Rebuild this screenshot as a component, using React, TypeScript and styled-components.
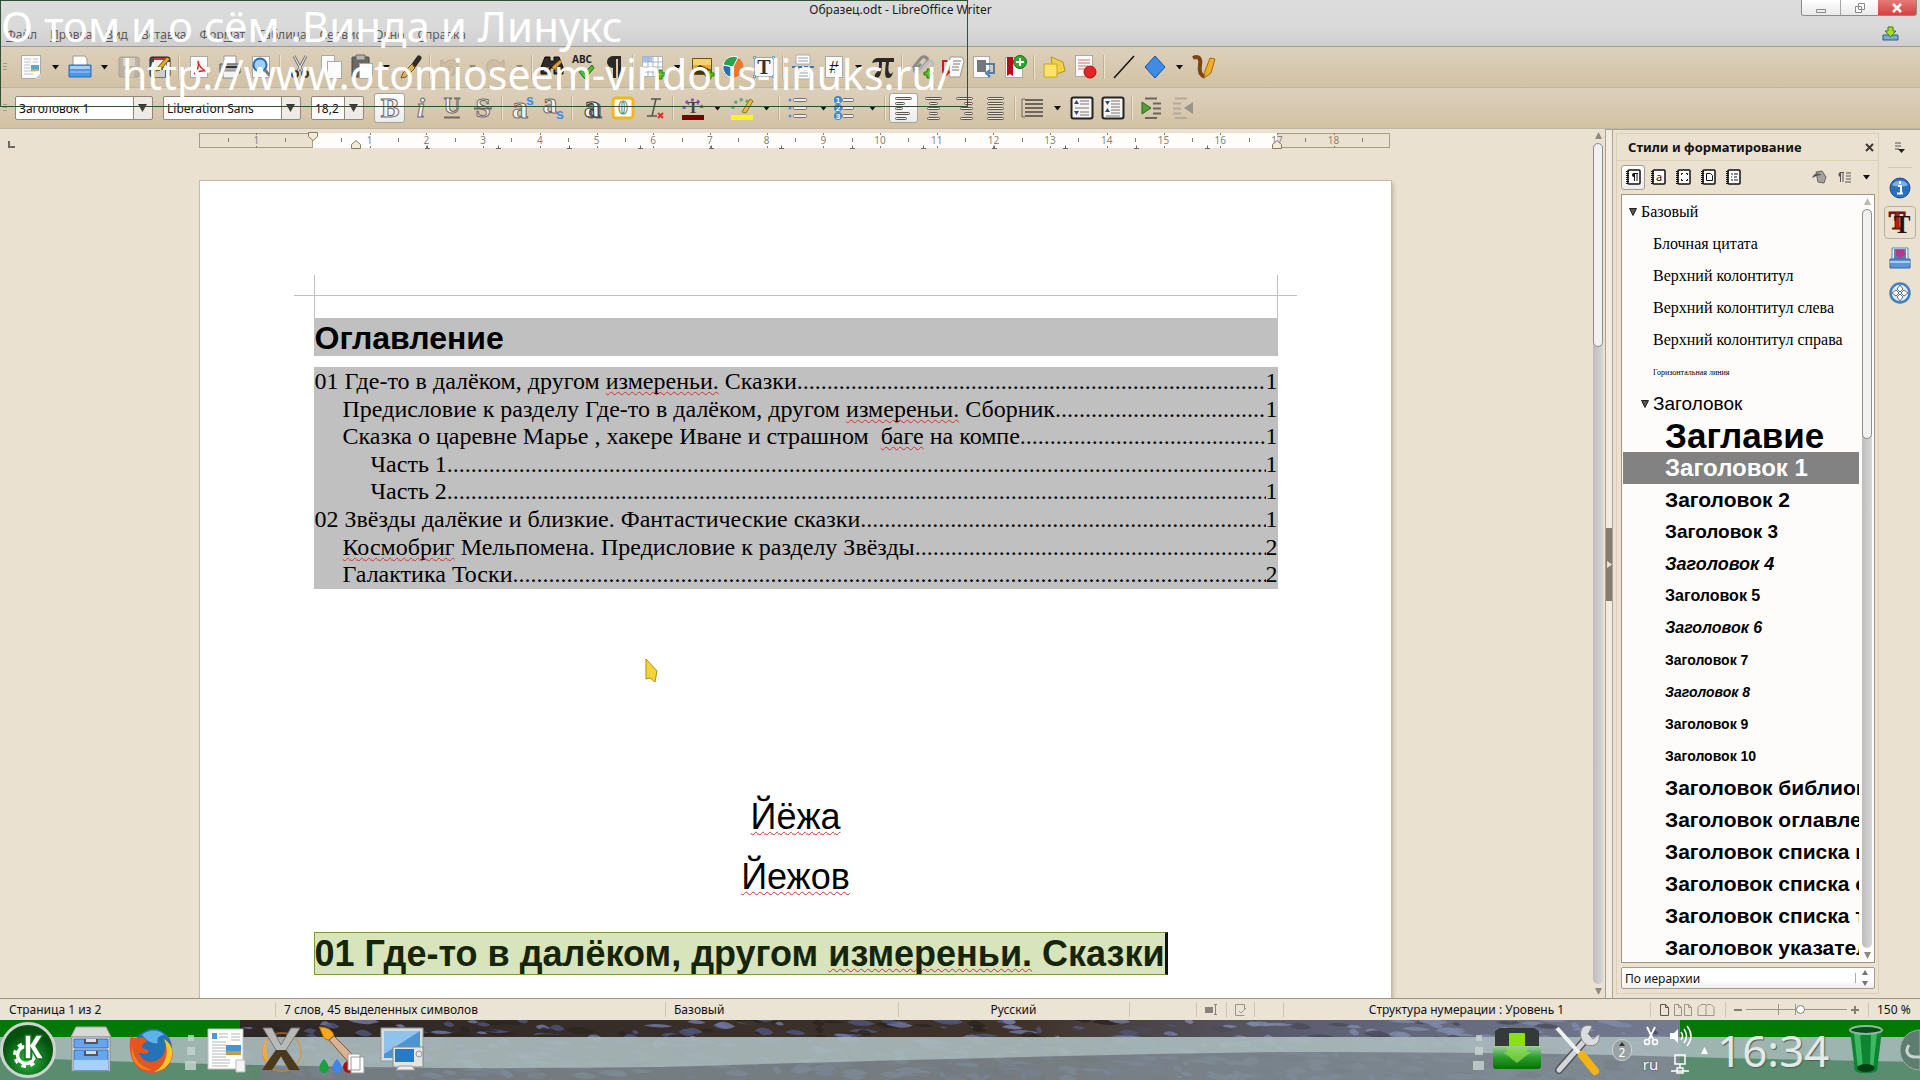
import React from "react";
import styled, { createGlobalStyle } from "styled-components";

const ui = `"Noto Sans", "Open Sans", sans-serif`;
const sans = `"Liberation Sans", Arial, sans-serif`;
const serif = `"Liberation Serif", "Times New Roman", serif`;

const Global = createGlobalStyle`
  *, *::before, *::after { box-sizing: border-box; }
  html, body { margin: 0; height: 100%; overflow: hidden; }
  body { font-family: ${ui}; font-size: 12px; color: #111; }
  button { font: inherit; color: inherit; padding: 0; border: 0; background: none; }
  a { color: inherit; text-decoration: none; }
  svg { display: block; flex: none; overflow: visible; }
`;

const Desktop = styled.div`
  position: relative;
  display: flex;
  flex-direction: column;
  height: 100vh;
  background: #eae1d1;
`;

/* ---------- window header ---------- */

const Header = styled.header`
  background: linear-gradient(#dcdcdc, #d9d9d9 60%, #cfcfcf);
  border-bottom: 1px solid #9b9b9b;
`;
const TitleBar = styled.div`
  display: flex;
  height: 22px;
  padding-right: 3px;
`;
const WindowTitle = styled.h1`
  flex: 1;
  margin: 0;
  font-size: 12px;
  line-height: 19px;
  font-weight: 400;
  text-align: center;
  color: #1c1c1c;
`;
const WindowButtons = styled.div`
  display: flex;
  height: 16px;
  border: 1px solid #8b8b8b;
  border-top: 0;
  border-radius: 0 0 3px 3px;
  overflow: hidden;
`;
const WindowButton = styled.button<{ $close?: boolean }>`
  display: grid;
  place-items: center;
  width: 38px;
  background: ${(p) => (p.$close ? "linear-gradient(#e47a76, #d8403f)" : "linear-gradient(#fff, #e9e9e9)")};
  border-left: ${(p) => (p.$close ? "0" : "1px solid #a5a5a5")};
  &:first-child { border-left: 0; }
`;
const MenuRow = styled.div`
  display: flex;
  align-items: center;
  justify-content: space-between;
  height: 24px;
  padding: 0 21px 0 6px;
`;
const Menu = styled.nav`
  display: flex;
  gap: 13px;
  font-size: 12px;
  color: #5c5c5c;
  u { text-underline-offset: 2px; }
`;

/* ---------- tool bars ---------- */

const ToolBar = styled.div`
  display: flex;
  align-items: center;
  height: 41px;
  background: linear-gradient(#ddd0bb, #d2c2a5);
  border-bottom: 1px solid #bdb5a6;
`;
const Grip = styled.div`
  width: 15px;
  height: 8px;
  padding-left: 3px;
  background: repeating-linear-gradient(#a59b88 0 1px, transparent 1px 3px) content-box;
  border-right: 8px solid transparent;
`;
const Tool = styled.button<{ $w?: number; $on?: boolean; $dim?: boolean }>`
  display: grid;
  place-items: center;
  width: ${(p) => p.$w || 31}px;
  height: 30px;
  opacity: ${(p) => (p.$dim ? 0.35 : 1)};
  border: 1px solid ${(p) => (p.$on ? "#a9a296" : "transparent")};
  border-radius: 3px;
  background: ${(p) => (p.$on ? "linear-gradient(#ffffff, #ececec)" : "none")};
`;
const Separator = styled.span`
  width: 8px;
  height: 24px;
  background: linear-gradient(90deg, transparent 3px, #c0b196 3px 4px, #ece2d0 4px 5px, transparent 5px);
`;
const Combo = styled.label<{ $w: number }>`
  display: grid;
  grid-template-columns: 1fr 19px;
  width: ${(p) => p.$w}px;
  height: 24px;
  margin-right: 10px;
  border: 1px solid #8f8778;
  border-radius: 2px;
  background: linear-gradient(90deg, transparent calc(100% - 19px), #8f8778 calc(100% - 19px) calc(100% - 18px), transparent calc(100% - 18px)),
    linear-gradient(90deg, #fff calc(100% - 19px), #eeebe6 calc(100% - 19px));
  svg { grid-area: 1 / 2; place-self: center; pointer-events: none; }
`;
const ComboSelect = styled.select`
  grid-area: 1 / 1 / 2 / 3;
  appearance: none;
  min-width: 0;
  padding: 0 0 0 3px;
  border: 0;
  outline: 0;
  background: none;
  font: 12px ${ui};
  color: #111;
`;

/* ---------- work area ---------- */

const Work = styled.main`
  display: flex;
  flex: 1;
  min-height: 0;
`;
const Editor = styled.section`
  display: flex;
  flex-direction: column;
  align-items: center;
  flex: 1;
  min-width: 0;
  overflow: hidden;
`;
const RulerRow = styled.div`
  display: grid;
  grid-template-columns: 1fr auto 1fr;
  align-self: stretch;
  height: 52px;
  padding-top: 2px;
`;
const TabKind = styled.button`
  display: block;
  width: 20px;
  height: 20px;
  padding: 6px 0 0 8px;
`;
const Page = styled.article`
  width: 1191px;
  flex: 1 0 auto;
  background: #fff;
  box-shadow: 0 0 0 1px #c3bbac, 2px 2px 4px rgba(90, 80, 60, 0.35);
`;
const Corners = styled.div`
  display: grid;
  grid-template-columns: 94px 20px 1fr 20px 94px;
  grid-template-rows: 94px 20px 23px;
`;
const CornerLine = styled.i<{ $at: string; $side: "left" | "right" | "top" }>`
  grid-area: ${(p) => p.$at};
  border: 0 solid #c0c0c0;
  border-${(p) => p.$side}-width: 1px;
`;
const Body = styled.div`
  margin: 0 113px 0 114px;
`;
const TocTitle = styled.h2`
  margin: 0 0 11px;
  padding: 2px 0 0 1px;
  background: #c0c0c0;
  font: 700 32px/36px ${sans};
  color: #000;
`;
const Toc = styled.nav`
  display: grid;
  grid-template-columns: minmax(0, 1fr);
  padding-top: 1px;
  background: #c0c0c0;
  font: 24px/1.15 ${serif};
  color: #000;
`;
const TocLine = styled.a<{ $level: number }>`
  display: flex;
  padding-left: ${(p) => 1 + p.$level * 28}px;
  white-space: pre;
`;
const Leader = styled.span`
  flex: 1;
  min-width: 0;
  overflow: hidden;
`;
const Misspelt = styled.span`
  text-decoration: underline wavy #d03030 1px;
  text-decoration-skip-ink: none;
  text-underline-offset: 2px;
`;
const Subtitle = styled.p<{ $top: number }>`
  margin: ${(p) => p.$top}px 0 0;
  font: 36px/42px ${sans};
  text-align: center;
  color: #000;
`;
const Chapter = styled.h2`
  width: fit-content;
  margin: 34px 0 0;
  border: 1px solid #7c9a3d;
  border-right: 3px solid #111;
  background: #d8e4bc;
  font: 700 36px/41px ${sans};
  color: #16240a;
`;

const ScrollColumn = styled.div`
  display: flex;
  flex-direction: column;
  align-items: center;
  justify-content: space-between;
  width: 15px;
  padding: 3px 2px 3px 3px;
`;
const Track = styled.div`
  flex: 1;
  width: 10px;
  margin: 4px 0;
  border-radius: 5px;
  background: linear-gradient(90deg, #bcbcbc, #d6d6d6);
`;
const Thumb = styled.div<{ $size: string }>`
  height: ${(p) => p.$size};
  border: 1px solid #8d8d8d;
  border-radius: 5px;
  background: #f1f1f1;
`;
const Splitter = styled.div`
  display: flex;
  align-items: center;
  width: 8px;
  border: 1px solid #aaa293;
  border-width: 1px 1px 0;
  background: #f2ecdf;
`;
const SplitHandle = styled.button`
  display: grid;
  place-items: center;
  width: 6px;
  height: 73px;
  background: #877d6d;
`;

/* ---------- side bar ---------- */

const Deck = styled.aside`
  display: flex;
  flex-direction: column;
  width: 266px;
  padding: 3px 0 4px 3px;
  border-top: 1px solid #aaa293;
`;
const DeckFrame = styled.div`
  display: flex;
  flex-direction: column;
  flex: 1;
  min-height: 0;
  padding: 0 3px 4px 4px;
  border: 1px solid #dccfb6;
`;
const DeckTitle = styled.div`
  display: flex;
  align-items: center;
  justify-content: space-between;
  height: 27px;
  margin: 0 -3px 0 -4px;
  padding: 0 4px 0 11px;
  border-bottom: 1px solid #dccfb6;
  h2 { margin: 0; font-size: 13px; line-height: 27px; font-weight: 700; }
`;
const StyleTools = styled.div`
  display: flex;
  align-items: center;
  gap: 1px;
  height: 33px;
  padding-bottom: 1px;
  div { flex: 1; }
`;
const StyleTool = styled.button<{ $on?: boolean; $w?: number }>`
  display: grid;
  place-items: center;
  width: ${(p) => p.$w || 24}px;
  height: 25px;
  border: 1px solid ${(p) => (p.$on ? "#a39c90" : "transparent")};
  border-radius: 3px;
  background: ${(p) => (p.$on ? "linear-gradient(#fff, #ececec)" : "none")};
`;
const ListBox = styled.div`
  display: flex;
  flex: 1;
  min-height: 0;
  border: 1px solid #a3947a;
  background: #fdfcfb;
`;
const StyleList = styled.ul`
  flex: 1;
  min-width: 0;
  margin: 0;
  padding: 1px 0 0 1px;
  list-style: none;
  overflow: hidden;
`;
const StyleRow = styled.li<{ $level: number; $size: number; $face: "serif" | "sans"; $bold?: boolean; $italic?: boolean; $on?: boolean }>`
  display: flex;
  align-items: center;
  gap: 4px;
  height: 32px;
  padding-left: ${(p) => 6 + p.$level * 12}px;
  overflow: hidden;
  white-space: nowrap;
  font-family: ${(p) => (p.$face === "serif" ? serif : sans)};
  font-size: ${(p) => p.$size}px;
  font-weight: ${(p) => (p.$bold ? 700 : 400)};
  font-style: ${(p) => (p.$italic ? "italic" : "normal")};
  color: ${(p) => (p.$on ? "#fff" : "#000")};
  background: ${(p) => (p.$on ? "#828282" : "none")};
`;
const Twisty = styled.span`
  width: 8px;
  flex: none;
`;
const Filter = styled.label`
  display: grid;
  grid-template-columns: 1fr 24px;
  height: 22px;
  margin-top: 4px;
  border: 1px solid #a39c90;
  border-radius: 2px;
  background: linear-gradient(#fff 60%, #eee);
  svg { grid-area: 1 / 2; place-self: center; pointer-events: none; }
`;
const TabStrip = styled.nav`
  display: flex;
  flex-direction: column;
  align-items: center;
  width: 41px;
  border-top: 1px solid #aaa293;
  hr { width: 24px; margin: 2px 0 3px; border: 0; border-top: 1px solid #d3c9b6; }
`;
const Tab = styled.button<{ $on?: boolean }>`
  display: grid;
  place-items: center;
  width: 32px;
  height: 33px;
  margin-bottom: 2px;
  border: 1px solid ${(p) => (p.$on ? "#b9b1a3" : "transparent")};
  border-radius: 4px;
`;

/* ---------- status bar ---------- */

const StatusBar = styled.footer`
  display: grid;
  grid-template-columns: 275fr 390fr 233fr 231fr 67fr 30fr 28fr 29fr 367fr 75fr 143fr 52fr;
  height: 22px;
  border-top: 1px solid #9c9384;
  background: #ebe3d4;
`;
const Cell = styled.div<{ $center?: boolean }>`
  display: flex;
  align-items: center;
  justify-content: ${(p) => (p.$center ? "center" : "flex-start")};
  gap: 4px;
  min-width: 0;
  padding: 0 ${(p) => (p.$center ? 0 : 9)}px;
  white-space: nowrap;
  line-height: 20px;
  & + & {
    background: linear-gradient(#cfc5b3, #cfc5b3) 0 3px / 1px 15px no-repeat;
  }
`;
const Zoom = styled.input`
  flex: 1;
  min-width: 0;
  height: 15px;
  margin: 0;
  appearance: none;
  background: linear-gradient(#9c968a, #9c968a) 0 7px / 100% 1px no-repeat,
    linear-gradient(#9c968a, #9c968a) 32% 2px / 1px 11px no-repeat,
    linear-gradient(#9c968a, #9c968a) 49% 2px / 1px 11px no-repeat;
  &::-webkit-slider-thumb {
    appearance: none;
    width: 9px;
    height: 9px;
    border: 1px solid #857f73;
    border-radius: 5px;
    background: #fff;
  }
`;

/* ---------- desktop panel ---------- */

const Panel = styled.footer`
  display: grid;
  height: 60px;
  overflow: hidden;
  > * { grid-area: 1 / 1; min-width: 0; }
`;
const PanelItems = styled.div`
  display: flex;
  align-items: center;
  justify-content: space-between;
  z-index: 1;
`;
const PanelGroup = styled.div`
  display: flex;
  align-items: center;
  height: 60px;
`;
const PanelButton = styled.button<{ $w: number }>`
  display: grid;
  place-items: center;
  width: ${(p) => p.$w}px;
  height: 60px;
`;
const Tray = styled.div`
  display: grid;
  grid-template-columns: 29px 29px;
  grid-template-rows: 28px 28px;
  place-items: center;
  color: #fff;
  font-size: 15px;
  text-shadow: 0 0 2px #333;
`;
const Desk = styled.button`
  display: grid;
  place-items: center;
  align-content: center;
  width: 20px;
  height: 22px;
  margin: 0 4px;
  border: 1px solid #ccd4d4;
  border-radius: 10px;
  background: #98a2a4;
  color: #fff;
  font-size: 12px;
  line-height: 13px;
`;
const Clock = styled.time`
  width: 122px;
  padding-left: 3px;
  font-size: 44px;
  line-height: 52px;
  color: #e3e9e6;
  text-shadow: 1px 1px 1px #4c5f58;
`;

/* ---------- overlays ---------- */

const Caption = styled.div`
  position: absolute;
  top: 0;
  left: 0;
  width: 968px;
  height: 107px;
  border: 1px solid #2f4f37;
  color: #fff;
  font-size: 42px;
  line-height: 49px;
  white-space: nowrap;
  pointer-events: none;
  p { margin: 0; }
  p + p { padding-left: 121px; font-size: 41px; }
`;
const Pointer = styled.div`
  position: absolute;
  left: 645px;
  top: 658px;
  pointer-events: none;
`;

/* ---------- drawings ---------- */

const Svg = ({ w = 24, h, box, children }: { w?: number; h?: number; box?: string; children: React.ReactNode }) => (
  <svg width={w} height={h ?? w} viewBox={box ?? `0 0 ${w} ${h ?? w}`} fill="none" aria-hidden="true">{children}</svg>
);
const Down = ({ c = "#111" }: { c?: string }) => <Svg w={7} h={5}><path d="M0 0h7L3.5 4.500z" fill={c} /></Svg>;
const BigDown = () => <Svg w={9} h={8}><path d="M0 0h9L4.500 8z" fill="#3e3b36" /></Svg>;
const UpArrow = ({ c = "#8d8980" }: { c?: string }) => <Svg w={7} h={7}><path d="M3.500 0L7 7H0z" fill={c} /></Svg>;
const DownArrow = () => <Svg w={7} h={7}><path d="M3.500 7L7 0H0z" fill="#8d8980" /></Svg>;

const Sheet = ({ x = 3, y = 1, w = 18, h = 22 }) => (
  <rect x={x + 0.5} y={y + 0.5} width={w - 1} height={h - 1} fill="#fbfbfb" stroke="#a9a9a9" />
);
const Plus = ({ x = 15, y = 15 }) => (
  <path d={`M${x + 3} ${y}h3v3h3v3h-3v3h-3v-3h-3v-3h3z`} fill="#5cc81c" stroke="#26720a" />
);
const Glyph = ({ t, size = 24, italic, fill = "#f7f4ee", stroke = "#6d6a66", x = 12, y = 20 }: {
  t: string; size?: number; italic?: boolean; fill?: string; stroke?: string; x?: number; y?: number;
}) => (
  <text x={x} y={y} fontSize={size} fontWeight="700" fontFamily="Liberation Serif" fontStyle={italic ? "italic" : "normal"}
    textAnchor="middle" fill={fill} stroke={stroke} strokeWidth="1">{t}</text>
);

const icons: Record<string, React.ReactNode> = {
  new: <><Sheet x={2} y={0} w={20} h={24} /><path d="M5 4h7M5 7h7M5 10h6M5 13h6M5 16h12M5 19h9M14 4h5M14 7h5" stroke="#b9c6d0" /><rect x="12" y="10" width="8" height="6" fill="#4fa7d8" /><rect x="12" y="14" width="8" height="2" fill="#d8a83c" /><path d="M16 24l6-6v6z" fill="#ccc" /></>,
  open: <><path d="M5 1h12l2 3v9H5z" fill="#fff" stroke="#999" /><path d="M1 10h22v12H1z" fill="#4c98e6" stroke="#2a6db5" /><path d="M2 11h20v3H2z" fill="#a6d0fa" /><path d="M2 16h20v2H2z" fill="#78b4f2" /></>,
  save: <><rect x="2" y="2" width="20" height="20" rx="2" fill="#8c8c8c" stroke="#555" /><path d="M6 3h12v8H6z" fill="#ddd" /><path d="M7 14h10v8H7z" fill="#bbb" /></>,
  saveas: <><rect x="2" y="2" width="20" height="20" rx="2" fill="#4a4a4a" stroke="#222" /><path d="M6 3h12v9H6z" fill="#f2efe6" /><path d="M6 3h12v2H6z" fill="#c33" /><path d="M7 15h10v7H7z" fill="#ccc" /><path d="M9 13L19 2l3 2-10 11-4 1z" fill="#e6a62a" stroke="#7a4b08" /></>,
  pdf: <><Sheet /><path d="M7 19c5-5 5-9 4-13 1 6 5 9 9 10-5-1-9 0-13 3z" stroke="#d9231d" strokeWidth="1.500" /></>,
  print: <><path d="M6 1h12v8H6z" fill="#fff" stroke="#999" /><path d="M2 9h20v9H2z" fill="#a9adb2" stroke="#555" /><path d="M4 11h16v2H4z" fill="#333" /><path d="M5 16h14v7H5z" fill="#f3f3f3" stroke="#888" /></>,
  preview: <><Sheet /><circle cx="11" cy="10" r="6.500" fill="#9cd0f5" stroke="#2c6cae" strokeWidth="2" /><path d="M16 15l6 7" stroke="#777" strokeWidth="3" /></>,
  cut: <><path d="M6 1l8 15M18 1l-8 15" stroke="#777" strokeWidth="3" /><path d="M6 1l8 15M18 1l-8 15" stroke="#f2f2f2" /><circle cx="7" cy="19" r="3" stroke="#333" strokeWidth="2" /><circle cx="17" cy="19" r="3" stroke="#333" strokeWidth="2" /></>,
  copy: <><Sheet x={2} y={0} w={14} h={17} /><Sheet x={8} y={6} w={15} h={18} /></>,
  paste: <><rect x="2" y="2" width="17" height="20" rx="1" fill="#6b6762" stroke="#444" /><path d="M6 0h9v5H6z" fill="#b5b5b5" stroke="#666" /><Sheet x={9} y={8} w={14} h={16} /></>,
  brush: <><path d="M20 3l-5 7" stroke="#2d2a27" strokeWidth="5" strokeLinecap="round" /><path d="M13 9l3 4-9 9-5 1 2-5z" fill="#d8b15e" stroke="#7d5a1a" /></>,
  undo: <path d="M4 14V5l4 3c6-6 14-3 13 5-1 6-7 8-7 8 4-5 3-10-3-9l3 3z" fill="#b9a98a" stroke="#80745c" />,
  redo: <path d="M20 14V5l-4 3C10 2 2 5 3 13c1 6 7 8 7 8-4-5-3-10 3-9l-3 3z" fill="#b9a98a" stroke="#80745c" />,
  find: <><path d="M5 2h5v4h4V2h5l4 10v7h-9v-6h-4v6H1v-7z" fill="#2f2c28" stroke="#0c0c0c" /><path d="M4 12h5v5H4zM15 12h5v5h-5z" fill="#7a6a55" /><path d="M12 12l8-7 2 2-8 8z" fill="#e29a22" /></>,
  spell: <><text x="11" y="8" fontSize="10" fontWeight="700" fontFamily="Noto Sans" textAnchor="middle" fill="#222">ABC</text><path d="M8 17l4-3 2 3 7-7 2 3-9 11z" fill="#4dbb2b" stroke="#1f7a10" /></>,
  pilcrow: <path d="M19 1H11a6 6 0 0 0 0 12v10h3V4h2v19h3z" fill="#2b2926" />,
  table: <><path d="M1.500 1.500h20v20h-20z" fill="#fff" stroke="#aab4bc" /><path d="M2 2h9v5H2z" fill="#9cc6ec" /><path d="M1 7h21M1 12h21M1 17h21M7 1v21M12 1v21M17 1v21" stroke="#aab4bc" /><Plus /></>,
  image: <><path d="M2.500 3.500h19v16h-19z" fill="#e6a92d" stroke="#6b5010" /><path d="M3 4h18v6H3z" fill="#f6d26e" /><path d="M3 14l7-4 11 5v4H3z" fill="#4a2f12" /><Plus /></>,
  chart: <><circle cx="12" cy="12" r="10.500" fill="#e9772c" /><path d="M12 12L2 10A10.500 10.500 0 0 1 17 2.500z" fill="#2fa04c" stroke="#fff" /><path d="M12 12L2 10a10.500 10.500 0 0 0 9 12.500z" fill="#2a6ab8" stroke="#fff" /></>,
  textbox: <><path d="M2.500 2.500h19v19h-19z" fill="#f8f8f8" stroke="#8fa8bc" /><text x="12" y="19" fontSize="20" fontWeight="700" fontFamily="Liberation Serif" textAnchor="middle" fill="#333">T</text><path d="M1.500 1.500h2v2h-2zM20.500 1.500h2v2h-2zM1.500 20.500h2v2h-2zM20.500 20.500h2v2h-2z" fill="#d8e8f6" stroke="#6a9bc4" /></>,
  pagebreak: <><path d="M5 0h14v9H5zM5 15h14v9H5z" fill="#fff" stroke="#aaa" /><path d="M7 3h10M7 6h10M7 18h10M7 21h10" stroke="#8fa0b0" /><path d="M1 12h22" stroke="#3d7ab5" strokeWidth="2" strokeDasharray="4 2" /></>,
  field: <><Sheet /><text x="12" y="18" fontSize="17" fontFamily="Liberation Sans" textAnchor="middle" fill="#111">#</text></>,
  pi: <path d="M1 8c2-5 4-5 7-5h15v4h-5c-1 8-1 11 2 12l2-2c-1 5-3 6-5 6-4 0-3-6-2-16h-4c0 7-1 16-5 16-3 0-3-3-1-5 3-2 3-6 3-11-3 0-4 0-7 1z" fill="#2b2926" />,
  link: <><path d="M5 15l6-6M3 13l8-10c3-3 8 0 6 4l-7 9c-3 3-7 0-5-3" stroke="#8a8a8a" strokeWidth="3" /><path d="M9 18l9-11c3-3 6 1 4 4l-5 7" stroke="#bdbdbd" strokeWidth="3" /><Plus x={14} y={14} /></>,
  footnote: <><path d="M9 2h12l2 4-4 16H8z" fill="#fafafa" stroke="#999" /><path d="M12 6h8M12 9h7M11 12h7M11 15h7" stroke="#777" /><path d="M8 6H2v11h4M4 14l4 3-4 4" stroke="#c61f1f" strokeWidth="2" /></>,
  cross: <><Sheet x={1} y={1} w={17} h={22} /><path d="M5 5h9v12H5z" fill="#73777b" /><path d="M14 9h8v9h-6M18 15l-4 3 4 4" stroke="#4a7fb4" strokeWidth="2" /></>,
  bookmark: <><Sheet x={2} y={2} w={18} h={21} /><path d="M4 2h6v19l-3-2-3 2z" fill="#b80c1c" /><circle cx="17" cy="7" r="6.500" fill="#2da82d" stroke="#157015" /><path d="M17 3v8M13 7h8" stroke="#fff" strokeWidth="2" /></>,
  comment: <><path d="M9 2l12 5 2 9-11 4z" fill="#f1d244" stroke="#b79516" /><path d="M2 9h13v13H2z" fill="#fbe36a" stroke="#c9a21f" /></>,
  track: <><Sheet x={2} y={0} /><path d="M5 5h12M5 8h12M5 11h10M5 14h8" stroke="#d56b6b" /><circle cx="17" cy="17" r="6" fill="#e32626" stroke="#a80f0f" /></>,
  line: <path d="M2 23L22 1" stroke="#111" strokeWidth="1.500" />,
  shape: <path d="M12 1l10 11-10 11L2 12z" fill="#3f8be6" stroke="#174f9e" />,
  pen: <><path d="M1 3c6-3 8 1 7 7-1 5 0 10 5 12" stroke="#7c4417" strokeWidth="4" /><path d="M18 3l5 1-4 14-7 5 1-7z" fill="#f0ac28" stroke="#a86a0b" /></>,
  bold: <Glyph t="B" size={28} y={21} />,
  italic: <Glyph t="i" size={28} italic y={21} />,
  underline: <><Glyph t="U" size={23} y={17} /><path d="M4 21.500h16" stroke="#6d6a66" strokeWidth="2" /></>,
  strike: <><Glyph t="S" size={27} y={21} /><path d="M3 12.500h18" stroke="#6d6a66" strokeWidth="2" /></>,
  sup: <><Glyph t="a" size={32} x={10} y={22} /><text x="20" y="9" fontSize="14" fontWeight="700" fontFamily="Liberation Sans" textAnchor="middle" fill="#3b8ee8">s</text></>,
  sub: <><Glyph t="a" size={29} x={9} y={17} /><text x="19" y="23" fontSize="14" fontWeight="700" fontFamily="Liberation Sans" textAnchor="middle" fill="#3b8ee8">s</text></>,
  shadow: <><Glyph t="a" size={32} x={14} y={22} fill="#666" stroke="#666" /><Glyph t="a" size={32} x={12} y={21} stroke="#333" /></>,
  outline: <><rect x="2" y="2" width="20" height="20" rx="3" fill="#fff" stroke="#f0b71e" strokeWidth="3" /><Glyph t="0" size={19} y={18} fill="#fff" stroke="#5c8f66" /></>,
  clear: <><path d="M9 3h10M5 20h10M14 3l-4 17" stroke="#555" strokeWidth="1.500" /><path d="M16 17l5 5M21 17l-5 5" stroke="#d3342c" strokeWidth="2" /></>,
  fontcolor: <><path d="M3 13a9 9 0 0 1 18 0" stroke="#8c55b5" strokeWidth="3" strokeDasharray="3 3" /><text x="12" y="17" fontSize="16" fontWeight="700" fontFamily="Liberation Serif" textAnchor="middle" fill="#444">T</text><path d="M1 19h22v5H1z" fill="#7c0000" /></>,
  backcolor: <><path d="M3 13a9 9 0 0 1 15-7" stroke="#5fa87a" strokeWidth="3" strokeDasharray="3 3" /><path d="M12 16L20 3l3 2-7 12z" fill="#e3c331" stroke="#8d7410" /><path d="M1 19h22v5H1z" fill="#fdf12a" /></>,
  bullets: <>{[4, 12, 20].map((y) => <g key={y}><circle cx="3" cy={y} r="1.500" fill="#5590cc" /><rect x="6.500" y={y - 1.500} width="13" height="3" rx="1" fill="#eee" stroke="#77736c" /></g>)}</>,
  numbers: <>{[4, 12, 20].map((y, i) => <g key={y}><circle cx="2" cy={y} r="4" fill="#3b86d8" /><text x="2" y={y + 3} fontSize="8" fontWeight="700" fontFamily="Liberation Sans" textAnchor="middle" fill="#fff">{i + 1}</text><rect x="6.500" y={y - 1.500} width="11" height="3" rx="1" fill="#eee" stroke="#77736c" /></g>)}</>,
};

const bars = (rows: [number, number][]) => (
  <>{rows.map(([x, w], i) => <rect key={i} x={x + 0.5} y={1.5 + i * 5} width={w} height="2" rx="1" fill="#f0ece4" stroke="#5b5750" />)}</>
);
icons.left = bars([[3, 16], [3, 9], [3, 7], [3, 14], [3, 11]]);
icons.center = bars([[3, 16], [7, 8], [5, 12], [7, 8], [5, 12]]);
icons.right = bars([[3, 16], [11, 8], [7, 12], [11, 8], [7, 12]]);
icons.justify = bars([[3, 16], [3, 16], [3, 16], [3, 16], [3, 16]]);
icons.spacing = <><path d="M3 4h18M3 8h18M3 12h18M3 16h18M3 20h18" stroke="#6b675f" strokeWidth="2" /><path d="M0 3v18M0 3h3M0 21h3" stroke="#6b675f" /></>;
icons.above = <><rect x="1.500" y="1.500" width="21" height="21" rx="2" fill="#f6f4f0" stroke="#222" strokeWidth="2" /><path d="M10 5h9M10 8h9M5 12h14M10 16h9M10 19h9" stroke="#777" /><path d="M4 8h5L6.500 4zM4 15h5l-2.500 4z" fill="#2d4a77" /></>;
icons.below = <><rect x="1.500" y="1.500" width="21" height="21" rx="2" fill="#f6f4f0" stroke="#222" strokeWidth="2" /><path d="M10 5h9M10 8h9M10 11h9M10 14h9M10 17h9M5 20h14" stroke="#777" /><path d="M4 5h5L6.500 9zM4 16h5l-2.500-4z" fill="#2d4a77" /></>;
icons.indent = <><path d="M2 6l9 6-9 6z" fill="#4f9f3c" stroke="#2a6b1c" /><path d="M5 2.500h12M13 7.500h8M13 12.500h8M13 17.500h8M5 22h12" stroke="#6b675f" strokeWidth="2" /></>;
icons.outdent = <><path d="M22 6l-9 6 9 6z" fill="#9b9488" /><path d="M4 2.500h12M2 7.500h8M2 12.500h8M2 17.500h8M4 22h12" stroke="#b3aa9a" strokeWidth="2" /></>;

type Item = [string, string, ("menu" | "")?];
const mainTools: Item[][] = [
  [["new", "Создать", "menu"], ["open", "Открыть", "menu"], ["save", "Сохранить"], ["saveas", "Сохранить как"]],
  [["pdf", "Экспорт в PDF"], ["print", "Печать"], ["preview", "Просмотр"]],
  [["cut", "Вырезать"], ["copy", "Копировать"], ["paste", "Вставить", "menu"], ["brush", "Копировать форматирование"]],
  [["undo", "Отменить", "menu"], ["redo", "Вернуть", "menu"]],
  [["find", "Найти и заменить"], ["spell", "Орфография"], ["pilcrow", "Непечатаемые символы"]],
  [["table", "Таблица", "menu"], ["image", "Изображение"], ["chart", "Диаграмма"], ["textbox", "Надпись"]],
  [["pagebreak", "Разрыв страницы"], ["field", "Поле", "menu"], ["pi", "Формула"]],
  [["link", "Гиперссылка"], ["footnote", "Сноска"], ["cross", "Концевая сноска"], ["bookmark", "Закладка"]],
  [["comment", "Комментарий"], ["track", "Запись изменений"]],
  [["line", "Линия"], ["shape", "Фигуры", "menu"], ["pen", "Рисование"]],
];
const formatTools: Item[][] = [
  [["bold", "Полужирный"], ["italic", "Курсив"], ["underline", "Подчёркнутый"], ["strike", "Зачёркнутый"]],
  [["sup", "Верхний индекс"], ["sub", "Нижний индекс"]],
  [["shadow", "Тень"], ["outline", "Контур"], ["clear", "Очистить"]],
  [["fontcolor", "Цвет шрифта", "menu"], ["backcolor", "Цвет фона", "menu"]],
  [["bullets", "Маркеры", "menu"], ["numbers", "Нумерация", "menu"]],
  [["left", "По левому краю"], ["center", "По центру"], ["right", "По правому краю"], ["justify", "По ширине"]],
  [["spacing", "Интервал", "menu"], ["above", "Увеличить интервал"], ["below", "Уменьшить интервал"]],
  [["indent", "Увеличить отступ"], ["outdent", "Уменьшить отступ"]],
];
const pressed = new Set(["bold", "left"]);
const dimmed = new Set(["save", "undo", "redo"]);
const narrow = new Set(["undo", "redo", "left", "spacing"]);

const Tools = ({ groups }: { groups: Item[][] }) => (
  <>
    {groups.map((group, g) => (
      <React.Fragment key={g}>
        {g > 0 && <Separator />}
        {group.map(([id, label, menu]) => (
          <React.Fragment key={id}>
            <Tool aria-label={label} $w={narrow.has(id) ? 29 : 31} $on={pressed.has(id)} $dim={dimmed.has(id)}>
              <Svg>{icons[id]}</Svg>
            </Tool>
            {menu && <Tool aria-label={`${label}: меню`} $w={18} $dim={dimmed.has(id)}><Down /></Tool>}
          </React.Fragment>
        ))}
      </React.Fragment>
    ))}
  </>
);

const cm = 56.7;
const origin = 114;
const Ruler = () => (
  <Svg w={1192} h={18}>
    <rect x="0.500" y="2.500" width="1190" height="14" fill="#eae1d1" stroke="#a79e86" />
    <rect x={origin} y="2" width={17 * cm} height="15" fill="#fefdfc" />
    <path d={`M${origin - 0.5} 2v15`} stroke="#a79e86" />
    {Array.from({ length: 20 }, (_, i) => i - 1).filter((n) => n !== 0 && n < 19).map((n) => (
      <g key={n}>
        <path d={`M${Math.round(origin + n * cm) + 0.5} 2v2M${Math.round(origin + n * cm) + 0.5} 15v2`} stroke="#857c68" />
        <text x={origin + n * cm} y="13" fontSize="10" fontFamily="Noto Sans" textAnchor="middle" fill="#8a8375">{Math.abs(n)}</text>
      </g>
    ))}
    {Array.from({ length: 21 }, (_, i) => i - 2).map((n) => (
      <path key={n} d={`M${Math.round(origin + (n + 0.5) * cm) + 0.5} 7v4`} stroke="#857c68" />
    ))}
    {Array.from({ length: 13 }, (_, i) => i + 1).map((n) => (
      <path key={n} d={`M${Math.round(origin + 41 + n * 70.9)} 17.500h5m-2.500 0v-3`} stroke="#6f6a5f" />
    ))}
    <path d="M109.500 1.500h9v4l-4.500 4-4.500-4z" fill="#f3ead8" stroke="#857c68" />
    <path d="M152.500 17.500h9v-4l-4.500-4-4.500 4z" fill="#f3ead8" stroke="#857c68" />
    <path d="M1073.500 17.500h9v-4l-4.500-4-4.500 4z" fill="#f3ead8" stroke="#857c68" />
  </Svg>
);

const dots = ".".repeat(170);
const toc: [number, React.ReactNode, number][] = [
  [0, <>01 Где-то в далёком, другом <Misspelt>измереньи.</Misspelt> Сказки</>, 1],
  [1, <>Предисловие к разделу Где-то в далёком, другом <Misspelt>измереньи.</Misspelt> Сборник</>, 1],
  [1, <>Сказка о царевне Марье , хакере Иване и страшном  <Misspelt>баге</Misspelt> на компе</>, 1],
  [2, "Часть 1", 1],
  [2, "Часть 2", 1],
  [0, "02 Звёзды далёкие и близкие. Фантастические сказки", 1],
  [1, <><Misspelt>Космобриг</Misspelt> Мельпомена. Предисловие к разделу Звёзды</>, 2],
  [1, "Галактика Тоски", 2],
];

type Row = { t: string; level: number; size: number; face?: "serif"; plain?: boolean; italic?: boolean; open?: boolean; on?: boolean };
const rows: Row[] = [
  { t: "Базовый", level: 0, size: 16, face: "serif", plain: true, open: true },
  { t: "Блочная цитата", level: 1, size: 16, face: "serif", plain: true },
  { t: "Верхний колонтитул", level: 1, size: 16, face: "serif", plain: true },
  { t: "Верхний колонтитул слева", level: 1, size: 16, face: "serif", plain: true },
  { t: "Верхний колонтитул справа", level: 1, size: 16, face: "serif", plain: true },
  { t: "Горизонтальная линия", level: 1, size: 8, face: "serif", plain: true },
  { t: "Заголовок", level: 1, size: 19, plain: true, open: true },
  { t: "Заглавие", level: 2, size: 35 },
  { t: "Заголовок 1", level: 2, size: 24, on: true },
  { t: "Заголовок 2", level: 2, size: 21 },
  { t: "Заголовок 3", level: 2, size: 19 },
  { t: "Заголовок 4", level: 2, size: 18, italic: true },
  { t: "Заголовок 5", level: 2, size: 16 },
  { t: "Заголовок 6", level: 2, size: 16, italic: true },
  { t: "Заголовок 7", level: 2, size: 14 },
  { t: "Заголовок 8", level: 2, size: 14, italic: true },
  { t: "Заголовок 9", level: 2, size: 14 },
  { t: "Заголовок 10", level: 2, size: 14 },
  { t: "Заголовок библиографии", level: 2, size: 21 },
  { t: "Заголовок оглавления", level: 2, size: 21 },
  { t: "Заголовок списка иллюстраций", level: 2, size: 21 },
  { t: "Заголовок списка объектов", level: 2, size: 21 },
  { t: "Заголовок списка таблиц", level: 2, size: 21 },
  { t: "Заголовок указателя", level: 2, size: 21 },
];

const book = (
  <><rect x="3" y="1" width="12" height="14" rx="1" fill="#fff" stroke="#111" strokeWidth="1.500" /><path d="M2.500 2v13" stroke="#111" strokeWidth="3" strokeDasharray="1 1" /></>
);
const styleTools: [string, React.ReactNode, boolean?][] = [
  ["Стили абзаца", <><path d="M13 4.500H8.500M9.500 4v8M12 4v8" stroke="#111" /><path d="M9 4a2 2 0 0 0 0 4z" fill="#111" /></>, true],
  ["Стили символов", <text x="9" y="12" fontSize="11" fontFamily="Noto Sans" textAnchor="middle" fill="#111">a</text>],
  ["Стили врезок", <path d="M6.500 6V4.500H8M11 4.500h1.500V6M12.500 10v1.500H11M8 11.500H6.500V10" stroke="#111" />],
  ["Стили страниц", <path d="M6.500 4.500h4l2 2v5h-6z" stroke="#111" />],
  ["Стили списков", <path d="M6 5h2M9 5h4M6 8h1M9 8h3M6 11h2M9 11h4" stroke="#111" />],
];

const Wallpaper = () => {
  let seed = 7;
  const rnd = () => (seed = (seed * 16807) % 2147483647) / 2147483647;
  const specks = Array.from({ length: 620 }, () => {
    const x = 240 + rnd() * 1415;
    const y = rnd() * 60;
    const w = 6 + rnd() * 26;
    const h = 1 + rnd() * 3;
    const far = (x - 240) / 1440;
    const dark = rnd() < 0.35;
    return { x, y, w, h, c: dark ? (far > 0.6 ? "#4a4a58" : "#2c241f") : far > 0.65 ? "#8089aa" : rnd() < 0.6 ? "#4f557c" : "#737ba5" };
  });
  return (
    <svg width="100%" height="60" viewBox="0 0 1920 60" preserveAspectRatio="none" aria-hidden="true">
      <defs>
        <linearGradient id="ground"><stop offset="0" stopColor="#2f2826" /><stop offset="0.550" stopColor="#40332b" /><stop offset="0.750" stopColor="#5d6073" /><stop offset="1" stopColor="#747b90" /></linearGradient>
      </defs>
      <rect width="1920" height="60" fill="#047804" />
      <rect x="240" width="1440" height="60" fill="url(#ground)" />
      {specks.map((s, i) => (
        <path key={i} d={`M${s.x} ${s.y}q${s.w * 0.4} ${-s.h * 2} ${s.w} ${s.h * 0.4}q${-s.w * 0.4} ${s.h * 1.5} ${-s.w} ${-s.h * 0.4}z`} fill={s.c} opacity="0.800" />
      ))}
      <rect y="17" width="1920" height="43" fill="#7f8b92" opacity="0.850" />
      <path d="M0 37Q150 43 260 45V60H0zM1680 36L1920 42V60H1680z" fill="#4f9068" opacity="0.600" />
      <path d="M0 17H1920V42L1720 38Q1500 31 1280 32Q1060 35 660 47Q450 50 260 45Q150 43 0 37z" fill="#c6d8d8" opacity="0.550" />
    </svg>
  );
};

const Dots = () => <Svg w={18} h={50}><path d="M6 10h6v6H6zM5 22h8v8H5zM3 36h11v9H3z" fill="#c8d5d2" opacity="0.800" /></Svg>;

const KMenu = () => (
  <Svg w={58}>
    <defs><radialGradient id="k" cy="0.700"><stop stopColor="#2bb53a" /><stop offset="1" stopColor="#03500f" /></radialGradient></defs>
    <circle cx="27" cy="29" r="26.500" fill="url(#k)" stroke="#cdd4d0" strokeWidth="3" />
    <circle cx="25" cy="34" r="8.500" stroke="#fff" strokeWidth="3.500" />
    <circle cx="25" cy="34" r="11.500" stroke="#fff" strokeWidth="3" strokeDasharray="4.500 4.530" />
    <path d="M24 14h6v8l5-8h7l-7 11 8 13h-7l-6-10v10h-6z" fill="#fff" stroke="#12721e" strokeWidth="1.500" />
  </Svg>
);
const Cabinet = () => (
  <Svg w={44} h={50}>
    <path d="M7 2h30l5 10H2z" fill="#d8d8d6" stroke="#aaa" /><path d="M3 12h38v34H3z" fill="#e5e9ec" stroke="#888" />
    <path d="M5 14h34v9H5zM5 25h34v20H5z" fill="#64a6f2" stroke="#356fae" /><path d="M5 35h34v10H5z" fill="#a7d0fb" />
    <path d="M16 14v4h12v-4M16 26v4h12v-4" stroke="#555" strokeWidth="2" fill="#ddd" />
  </Svg>
);
const Firefox = () => (
  <Svg w={48}>
    <circle cx="25" cy="22" r="19" fill="#2772b4" /><path d="M14 9c6-6 18-6 22 0-5 0-8 4-6 8-5 1-8-1-11-3z" fill="#5db3e8" />
    <path d="M3 9c1 4 3 3 6 3 5-2 9 0 10 4-4 1-5 3-5 6 3 1 6 1 7 4-4 3-7 1-10 1 2 8 12 11 19 7 8-5 9-14 6-21 8 5 11 14 7 22-4 8-11 12-19 12C9 47-2 32 3 9z" fill="#e2561f" />
    <path d="M36 13c8 5 10 13 7 21-4 8-10 11-17 12 12-6 16-20 10-33z" fill="#f8c62e" />
    <path d="M4 20c1 12 8 21 20 24C10 45 2 34 4 20z" fill="#f58220" />
  </Svg>
);
const DocIcon = () => (
  <Svg w={40} h={46}>
    <path d="M2 2h35v40H2z" fill="#fff" stroke="#bbb" /><path d="M6 6h5v6H6z" fill="#4c9ad8" />
    <path d="M13 7h9M13 10h9M25 7h9M25 10h9M25 13h9M6 15h14M6 18h14M6 21h14M6 24h14M6 27h14M6 30h14M6 33h18M6 36h18M6 39h16" stroke="#b0b4b8" />
    <path d="M20 18h15v10H20z" fill="#3f97d6" /><path d="M20 24h15v4H20z" fill="#c79a45" /><path d="M30 33h9v12h-9z" fill="#f4f4f4" stroke="#bbb" />
  </Svg>
);
const XIcon = () => (
  <Svg w={46} h={48}>
    <circle cx="23" cy="26" r="19" stroke="#e88b1e" strokeWidth="2" opacity="0.500" /><path d="M8 12c-7 10-5 22 4 28-4-10-6-18-4-28z" fill="#f8a83a" />
    <path d="M4 2h9l9 17 10-17h9L27 24l14 20H30l-8-14-9 14H3l14-20z" fill="#b9bab8" stroke="#777" /><path d="M17 24l5 0 5 0 14 20H30l-8-14-9 14H3z" fill="#4a3a1d" />
  </Svg>
);
const BrushIcon = () => (
  <Svg w={50} h={48}>
    <path d="M2 1c8 0 14 3 15 9l-5 4C5 14 6 7 2 1z" fill="#f6a91d" stroke="#b46d06" /><path d="M12 14l5-4 22 22-6 6z" fill="#d9b393" stroke="#7b573e" />
    <path d="M7 33c8 8 4 14 0 14s-8-6 0-14z" fill="#19a13f" /><path d="M20 33c8 8 4 14 0 14s-8-6 0-14z" fill="#3f86e8" /><circle cx="32" cy="41" r="6" fill="#a80f1c" />
    <path d="M31 28h12v16H31zM34 31h13v16H34z" fill="#fff" stroke="#999" />
  </Svg>
);
const MonitorIcon = () => (
  <Svg w={46} h={48}>
    <path d="M2 2h42v33H2z" fill="#d8dde0" stroke="#999" /><path d="M5 5h36v27H5z" fill="#4d94d2" /><path d="M5 5h36L5 28z" fill="#8fc3ee" />
    <path d="M14 21h30v20H14z" fill="#e4e4e4" stroke="#888" /><path d="M16 23h19v13H16z" fill="#2a79c6" /><circle cx="40" cy="28" r="3" stroke="#999" /><path d="M17 44h19l-3-4H20z" fill="#eee" stroke="#999" />
  </Svg>
);
const Download = () => (
  <Svg w={50} h={46}>
    <defs><linearGradient id="tray" x2="0" y2="1"><stop stopColor="#9fcf9c" /><stop offset="0.500" stopColor="#2a9c2a" /><stop offset="1" stopColor="#0a6d0c" /></linearGradient></defs>
    <path d="M3 4l5-3h34l5 3v16H3z" fill="#34393a" /><rect x="17" y="6" width="16" height="14" rx="1" fill="#8be012" />
    <path d="M1 19h48v20q0 3-3 3H4q-3 0-3-3z" fill="url(#tray)" /><path d="M15 20h20v5h4L25 36 11 25h4z" fill="#8fe04a" opacity="0.700" />
  </Svg>
);
const ToolsIcon = () => (
  <Svg w={48} h={52}>
    <path d="M6 46L34 14" stroke="#555" strokeWidth="8" strokeLinecap="round" /><path d="M6 46L34 14" stroke="#d3d7da" strokeWidth="5" strokeLinecap="round" /><path d="M30 3c5-3 9-1 9 0l-4 7 5 5 6-5c2 8-4 14-12 11-6-3-9-12-4-18z" fill="#dadddf" stroke="#888" />
    <path d="M4 4l24 27" stroke="#f0f2f2" strokeWidth="4" /><path d="M29 31l13 16" stroke="#f3b313" strokeWidth="8" strokeLinecap="round" />
  </Svg>
);
const Trash = () => (
  <Svg w={34} h={50}>
    <path d="M1 5h32l-5 41c-5 3-17 3-22 0z" fill="#0d8431" /><path d="M5 8h6l3 36H9zM22 8h6l-4 36h-3z" fill="#52cf78" opacity="0.700" /><ellipse cx="17" cy="5" rx="16" ry="4" fill="#084c1c" stroke="#8fb89b" strokeWidth="2" /><ellipse cx="17" cy="43" rx="9" ry="4" fill="#053d12" />
  </Svg>
);

export default function App() {
  return (
    <Desktop>
      <Global />
      <Header>
        <TitleBar>
          <WindowTitle>Образец.odt - LibreOffice Writer</WindowTitle>
          <WindowButtons>
            <WindowButton aria-label="Свернуть"><Svg w={10} h={12}><path d="M.5 7.500h9v3h-9z" stroke="#888" /></Svg></WindowButton>
            <WindowButton aria-label="Развернуть"><Svg w={10} h={10}><path d="M3.500.5h6v6h-6zM.5 3.500h6v6h-6z" stroke="#888" fill="#fff" /></Svg></WindowButton>
            <WindowButton $close aria-label="Закрыть"><Svg w={10} h={10}><path d="M1 1l8 8M9 1l-8 8" stroke="#fff" strokeWidth="2.500" /></Svg></WindowButton>
          </WindowButtons>
        </TitleBar>
        <MenuRow>
          <Menu>
            <a href="#file"><u>Ф</u>айл</a><a href="#edit"><u>П</u>равка</a><a href="#view"><u>В</u>ид</a><a href="#insert">Вст<u>а</u>вка</a>
            <a href="#format">Фор<u>м</u>ат</a><a href="#table"><u>Т</u>аблица</a><a href="#tools">С<u>е</u>рвис</a><a href="#window"><u>О</u>кно</a><a href="#help"><u>С</u>правка</a>
          </Menu>
          <Svg w={17} h={14}><path d="M1 8h15v5H1z" fill="#7fa9cf" stroke="#2d5f8e" /><path d="M6 0h5v4h3L8.500 10 3 4h3z" fill="#a6dc2c" stroke="#3d7d0c" /></Svg>
        </MenuRow>
      </Header>

      <ToolBar><Grip /><Tools groups={mainTools} /></ToolBar>
      <ToolBar>
        <Grip />
        <Combo $w={138}><ComboSelect aria-label="Стиль абзаца"><option>Заголовок 1</option></ComboSelect><BigDown /></Combo>
        <Combo $w={138}><ComboSelect aria-label="Шрифт"><option>Liberation Sans</option></ComboSelect><BigDown /></Combo>
        <Combo $w={53}><ComboSelect aria-label="Кегль"><option>18,2</option></ComboSelect><BigDown /></Combo>
        <Tools groups={formatTools} />
      </ToolBar>

      <Work>
        <Editor>
          <RulerRow>
            <TabKind aria-label="Тип табуляции"><Svg w={7} h={7}><path d="M1 0v6h6" stroke="#6f6a5f" strokeWidth="2" /></Svg></TabKind>
            <Ruler />
          </RulerRow>
          <Page>
            <Corners>
              <CornerLine $at="2 / 3 / 4 / 4" $side="left" />
              <CornerLine $at="3 / 2 / 4 / 5" $side="top" />
              <CornerLine $at="2 / 4 / 4 / 5" $side="left" />
            </Corners>
            <Body>
              <TocTitle>Оглавление</TocTitle>
              <Toc>
                {toc.map(([level, text, page], i) => (
                  <TocLine key={i} href={`#s${i}`} $level={level}><span>{text}</span><Leader>{dots}</Leader><span>{page}</span></TocLine>
                ))}
              </Toc>
              <Subtitle $top={207}><Misspelt>Йёжа</Misspelt></Subtitle>
              <Subtitle $top={18}><Misspelt>Йежов</Misspelt></Subtitle>
              <Chapter>01 Где-то в далёком, другом <Misspelt>измереньи.</Misspelt> Сказки</Chapter>
            </Body>
          </Page>
        </Editor>
        <ScrollColumn><UpArrow /><Track><Thumb $size="204px" /></Track><DownArrow /></ScrollColumn>
        <Splitter><SplitHandle aria-label="Скрыть панель"><Svg w={5} h={7}><path d="M0 0l5 3.500L0 7z" fill="#e9e2d4" /></Svg></SplitHandle></Splitter>
        <Deck>
          <DeckFrame>
            <DeckTitle>
              <h2>Стили и форматирование</h2>
              <button aria-label="Закрыть панель"><Svg w={9} h={9}><path d="M1 1l7 7M8 1L1 8" stroke="#3c3a36" strokeWidth="2" /></Svg></button>
            </DeckTitle>
            <StyleTools>
              {styleTools.map(([label, mark, on]) => <StyleTool key={label} aria-label={label} $on={on}><Svg w={16}>{book}{mark}</Svg></StyleTool>)}
              <div />
              <StyleTool aria-label="Режим заливки"><Svg w={16}><path d="M5 3l6-1 4 6-2 6-6-1z" fill="#a3a39c" stroke="#666" /><path d="M1 9c2-6 7-5 10-3-4 0-6 1-10 3z" fill="#555" /></Svg></StyleTool>
              <StyleTool aria-label="Создать стиль"><Svg w={16}><path d="M4.500 3v10M7 3v10M8 3.500H4M10 4h5M10 7h5M10 10h5M9 13h6" stroke="#555" /><path d="M5 3a2 2 0 0 0 0 5z" fill="#555" /></Svg></StyleTool>
              <StyleTool aria-label="Другие действия" $w={18}><Down /></StyleTool>
            </StyleTools>
            <ListBox>
              <StyleList>
                {rows.map((r) => (
                  <StyleRow key={r.t} $level={r.level} $size={r.size} $face={r.face ?? "sans"} $bold={!r.plain} $italic={r.italic} $on={r.on}>
                    <Twisty>{r.open && <Svg w={8} h={8}><path d="M.5.5h7L4 7.500z" fill="#555" stroke="#222" /></Svg>}</Twisty>{r.t}
                  </StyleRow>
                ))}
              </StyleList>
              <ScrollColumn><UpArrow c="#bdb8ae" /><Track><Thumb $size="230px" /></Track><DownArrow /></ScrollColumn>
            </ListBox>
            <Filter>
              <ComboSelect aria-label="Фильтр стилей"><option>По иерархии</option></ComboSelect>
              <Svg w={14} h={18}><path d="M.5 4v10" stroke="#aaa" /><path d="M10 1l3 5H7zM10 17l3-5H7z" fill="#77736c" /></Svg>
            </Filter>
          </DeckFrame>
        </Deck>
        <TabStrip>
          <Tab aria-label="Параметры боковой панели"><Svg w={12} h={12}><path d="M1 2h6M1 5h6M1 8h4" stroke="#555" /><path d="M4 8h7l-3.500 4z" fill="#222" /></Svg></Tab>
          <hr />
          <Tab aria-label="Свойства"><Svg w={22}><circle cx="11" cy="11" r="10" fill="#2b6fbd" stroke="#1b4f92" /><path d="M3 8a9 8 0 0 1 16 0c-5 2-11 2-16 0z" fill="#7db1e6" /><path d="M9 9h3v7M8 16.500h6M11 4v3" stroke="#fff" strokeWidth="2" /></Svg></Tab>
          <Tab $on aria-label="Стили"><Svg w={24}><text x="9" y="18" fontSize="25" fontWeight="700" fontFamily="Liberation Serif" textAnchor="middle" fill="#c01818" stroke="#5c1010">T</text><text x="14" y="22" fontSize="25" fontWeight="700" fontFamily="Liberation Serif" textAnchor="middle" fill="#241414">T</text></Svg></Tab>
          <Tab aria-label="Галерея"><Svg w={22}><path d="M3 1h16v12H3z" fill="#e9eef4" stroke="#5d88b8" /><path d="M5 2h12v10H5z" fill="#5f7fae" /><path d="M7 3h8l1 5-5 3-4-3z" fill="#b03a86" /><path d="M1 12h20v9H1z" fill="#5b96d8" stroke="#3569a4" /><path d="M1 15h20" stroke="#a6ccf2" strokeWidth="2" /></Svg></Tab>
          <Tab aria-label="Навигатор"><Svg w={22}><circle cx="11" cy="11" r="9.500" fill="#e2edf6" stroke="#4680b8" strokeWidth="2.500" /><path d="M11 3l3 4-3 3-3-3zM11 19l3-4-3-3-3 3zM3 11l4-3 3 3-3 3zM19 11l-4-3-3 3 3 3z" fill="#fff" stroke="#57718c" /></Svg></Tab>
        </TabStrip>
      </Work>

      <StatusBar>
        <Cell>Страница 1 из 2</Cell>
        <Cell>7 слов, 45 выделенных символов</Cell>
        <Cell>Базовый</Cell>
        <Cell $center>Русский</Cell>
        <Cell />
        <Cell $center><Svg w={12} h={11}><path d="M0 3h8v6H0z" fill="#88827a" /><path d="M10.500 1v9M9 .5h3M9 10.500h3" stroke="#88827a" /></Svg></Cell>
        <Cell $center><Svg w={11} h={12}><path d="M9.500 5V.5h-9v11h9M4 7l2 2 5-5" stroke="#9a948a" /></Svg></Cell>
        <Cell />
        <Cell $center>Структура нумерации : Уровень 1</Cell>
        <Cell $center>
          <Svg w={55} h={12}>
            <path d="M.5.500h5l3 3v8h-8zM5.500.500v3h3" stroke="#5d584f" /><path d="M14.500.500h4l3 3v8h-7zM18.500.500v3h3M24.500.500h4l3 3v8h-7zM28.500.500v3h3M46 1.500v10h-8v-8l3-3h5M46 1.500l2-1h3l3 3v8h-8" stroke="#9a948a" />
          </Svg>
        </Cell>
        <Cell>
          <Svg w={8} h={8}><path d="M0 4h8" stroke="#857f73" strokeWidth="2" /></Svg>
          <Zoom type="range" min="0" max="100" defaultValue="54" aria-label="Масштаб" />
          <Svg w={8} h={8}><path d="M0 4h8M4 0v8" stroke="#857f73" strokeWidth="2" /></Svg>
        </Cell>
        <Cell>150 %</Cell>
      </StatusBar>

      <Panel>
        <Wallpaper />
        <PanelItems>
          <PanelGroup>
            <PanelButton $w={60} aria-label="Меню"><KMenu /></PanelButton>
            <PanelButton $w={61} aria-label="Файлы"><Cabinet /></PanelButton>
            <PanelButton $w={61} aria-label="Firefox"><Firefox /></PanelButton>
            <Dots />
            <PanelButton $w={52} aria-label="Документ"><DocIcon /></PanelButton>
            <PanelButton $w={60} aria-label="X"><XIcon /></PanelButton>
            <PanelButton $w={60} aria-label="Графика"><BrushIcon /></PanelButton>
            <PanelButton $w={60} aria-label="Экран"><MonitorIcon /></PanelButton>
          </PanelGroup>
          <PanelGroup>
            <Dots />
            <PanelButton $w={58} aria-label="Загрузки"><Download /></PanelButton>
            <PanelButton $w={62} aria-label="Настройки"><ToolsIcon /></PanelButton>
            <Desk aria-label="Рабочий стол 2"><Svg w={6} h={4}><path d="M3 0l3 4H0z" fill="#333" /></Svg>2</Desk>
            <Tray>
              <Svg w={16} h={20}><path d="M4 1l6 12M12 1L6 13" stroke="#fff" strokeWidth="2" /><circle cx="4" cy="16" r="2.500" stroke="#fff" strokeWidth="1.500" /><circle cx="12" cy="16" r="2.500" stroke="#fff" strokeWidth="1.500" /></Svg>
              <Svg w={22} h={22}><path d="M1 8h4l4-4v14l-4-4H1z" fill="#fff" /><path d="M12 7q3 4 0 8M15 4q5 7 0 14M18 1q8 10 0 20" stroke="#fff" strokeWidth="1.500" /></Svg>
              <span>ru</span>
              <Svg w={20} h={20}><path d="M5 1h10v9H5zM10 10v4M1 17h18M7 14h6v5H7z" stroke="#fff" strokeWidth="1.500" /></Svg>
            </Tray>
            <PanelButton $w={20} aria-label="Показать значки"><UpArrow c="#fff" /></PanelButton>
            <Clock>16:34</Clock>
            <PanelButton $w={60} aria-label="Корзина"><Trash /></PanelButton>
            <PanelButton $w={24} aria-label="Панель"><Svg w={24} h={48}><path d="M24 4a20 20 0 0 0 0 40z" fill="#5d7d70" stroke="#9bb0a8" /><path d="M13 19c-5 7 0 12 6 12h5" stroke="#c8d5d0" strokeWidth="3" /></Svg></PanelButton>
          </PanelGroup>
        </PanelItems>
      </Panel>

      <Caption><p>О том и о сём .Винда и Линукс</p><p>http://www.otomioseem-vindous-linuks.ru/</p></Caption>
      <Pointer><Svg w={16} h={26}><path d="M1 1l11 12-2 11-5-4-4 1z" fill="#f4d338" stroke="#b58c12" /></Svg></Pointer>
    </Desktop>
  );
}
